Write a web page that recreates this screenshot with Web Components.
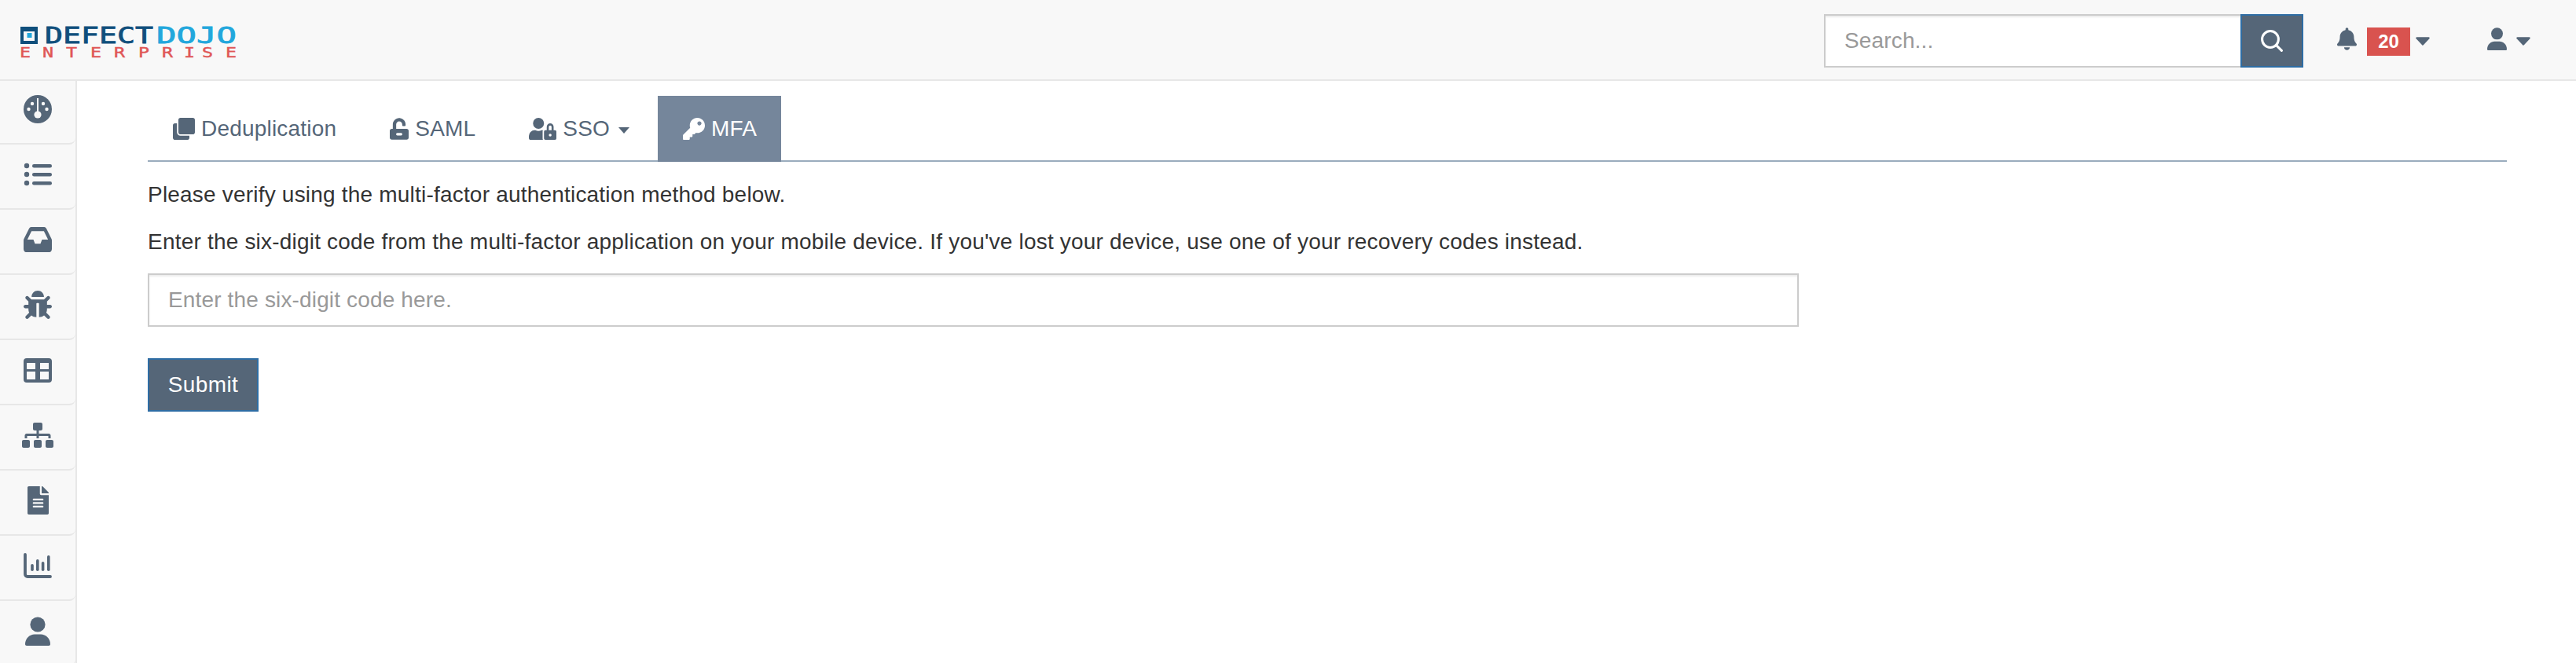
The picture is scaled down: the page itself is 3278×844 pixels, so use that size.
<!DOCTYPE html>
<html lang="en">
<head>
<meta charset="utf-8">
<title>DefectDojo - MFA</title>
<style>
  html, body { margin: 0; height: 100%; overflow: hidden; background: #fff; }
  body { font: 28px/40px "Liberation Sans", Arial, sans-serif; letter-spacing: .2px; color: #333; }
</style>
</head>
<body>
<dd-app>
  <dd-navbar slot="top"></dd-navbar>
  <dd-sidebar slot="side">
    <dd-side-item icon="gauge" w="36" h="36"></dd-side-item>
    <dd-side-item icon="list" w="36" h="30"></dd-side-item>
    <dd-side-item icon="inbox" w="36" h="32"></dd-side-item>
    <dd-side-item icon="bug" w="36" h="36"></dd-side-item>
    <dd-side-item icon="table" w="36" h="31"></dd-side-item>
    <dd-side-item icon="sitemap" w="40" h="32"></dd-side-item>
    <dd-side-item icon="file" w="27" h="36"></dd-side-item>
    <dd-side-item icon="chart" w="36" h="32"></dd-side-item>
    <dd-side-item icon="user" w="32" h="37"></dd-side-item>
  </dd-sidebar>
  <dd-tabs>
    <dd-tab icon="clone" w="28">Deduplication</dd-tab>
    <dd-tab icon="unlock" w="24">SAML</dd-tab>
    <dd-tab icon="userlock" w="35" caret>SSO</dd-tab>
    <dd-tab icon="key" w="28" active>MFA</dd-tab>
  </dd-tabs>
  <dd-mfa-form></dd-mfa-form>
</dd-app>

<script>
const ICONS = {
  gauge: { box: '0 0 36 36', body: `
    <circle cx="18" cy="18" r="18"/>
    <g fill="#f8f8f8"><circle cx="11" cy="11" r="2.2"/><circle cx="25" cy="11" r="2.2"/><circle cx="6.5" cy="18" r="2.2"/><circle cx="29.5" cy="18" r="2.2"/>
    <rect x="17" y="4" width="2" height="20"/><circle cx="18" cy="25" r="4.6"/></g>` },
  list: { box: '0 0 36 30', body: `
    <circle cx="4" cy="4" r="3.2"/><circle cx="4" cy="15" r="3.2"/><circle cx="4" cy="26" r="3.2"/>
    <rect x="11" y="2" width="25" height="4.4" rx="2.2"/><rect x="11" y="13" width="25" height="4.4" rx="2.2"/><rect x="11" y="24" width="25" height="4.4" rx="2.2"/>` },
  inbox: { box: '0 64 576 384', stretch: true, d: 'M567.938 243.908L462.25 85.374A48.003 48.003 0 0 0 422.311 64H153.689a48 48 0 0 0-39.938 21.374L8.062 243.908A47.994 47.994 0 0 0 0 270.533V400c0 26.51 21.49 48 48 48h480c26.51 0 48-21.49 48-48V270.533a47.994 47.994 0 0 0-8.062-26.625zM162.252 128h251.497l85.333 128H376l-32 64H232l-32-64H76.918l85.334-128z' },
  bug: { box: '0 0 512 512', d: 'M511.988 288.9c-.478 17.43-15.217 31.1-32.653 31.1H424v16c0 21.864-4.882 42.584-13.6 61.145l60.228 60.228c12.496 12.497 12.496 32.758 0 45.255-12.498 12.497-32.759 12.496-45.256 0l-54.736-54.736C345.886 467.965 314.351 480 280 480V236c0-6.627-5.373-12-12-12h-24c-6.627 0-12 5.373-12 12v244c-34.351 0-65.886-12.035-90.636-32.108l-54.736 54.736c-12.498 12.497-32.759 12.496-45.256 0-12.496-12.497-12.496-32.758 0-45.255l60.228-60.228C92.882 378.584 88 357.864 88 336v-16H32.666C15.23 320 .491 306.33.013 288.9-.484 270.816 14.028 256 32 256h56v-58.745l-46.628-46.628c-12.496-12.497-12.496-32.758 0-45.255 12.498-12.497 32.758-12.497 45.256 0L141.255 160h229.489l54.627-54.627c12.498-12.497 32.758-12.497 45.256 0 12.496 12.497 12.496 32.758 0 45.255L424 197.255V256h56c17.972 0 32.484 14.816 31.988 32.9zM257 0c-61.856 0-112 50.144-112 112h224C369 50.144 318.856 0 257 0z' },
  table: { box: '0 0 36 31', evenodd: true, d: 'M4 0h28a4 4 0 0 1 4 4v23a4 4 0 0 1-4 4H4a4 4 0 0 1-4-4V4a4 4 0 0 1 4-4zM4 6v8h11V6zM21 6v8h11V6zM4 17v10h11V17zM21 17v10h11V17z' },
  sitemap: { box: '0 0 640 512', d: 'M128 352H32c-17.67 0-32 14.33-32 32v96c0 17.67 14.33 32 32 32h96c17.67 0 32-14.33 32-32v-96c0-17.67-14.33-32-32-32zm-24-80h192v48h48v-48h192v48h48v-57.59c0-21.17-17.23-38.41-38.41-38.41H344v-64h40c17.67 0 32-14.33 32-32V32c0-17.67-14.33-32-32-32H256c-17.67 0-32 14.33-32 32v96c0 17.67 14.33 32 32 32h40v64H94.41C73.23 224 56 241.23 56 262.41V320h48v-48zm264 80h-96c-17.67 0-32 14.33-32 32v96c0 17.67 14.33 32 32 32h96c17.67 0 32-14.33 32-32v-96c0-17.67-14.33-32-32-32zm240 0h-96c-17.67 0-32 14.33-32 32v96c0 17.67 14.33 32 32 32h96c17.67 0 32-14.33 32-32v-96c0-17.67-14.33-32-32-32z' },
  file: { box: '0 0 384 512', d: 'M224 136V0H24C10.7 0 0 10.7 0 24v464c0 13.3 10.7 24 24 24h336c13.3 0 24-10.7 24-24V160H248c-13.2 0-24-10.8-24-24zm64 236c0 6.6-5.4 12-12 12H108c-6.6 0-12-5.4-12-12v-8c0-6.6 5.4-12 12-12h168c6.6 0 12 5.4 12 12v8zm0-64c0 6.6-5.4 12-12 12H108c-6.6 0-12-5.4-12-12v-8c0-6.6 5.4-12 12-12h168c6.6 0 12 5.4 12 12v8zm0-72v8c0 6.6-5.4 12-12 12H108c-6.6 0-12-5.4-12-12v-8c0-6.6 5.4-12 12-12h168c6.6 0 12 5.4 12 12zm96-114.1v6.1H256V0h6.1c6.4 0 12.5 2.5 17 7l97.9 98c4.5 4.5 7 10.6 7 16.9z' },
  chart: { box: '0 0 36 32', body: `
    <path d="M2 2v25a3 3 0 0 0 3 3h29" fill="none" stroke="currentColor" stroke-width="3.8" stroke-linecap="round"/>
    <rect x="9.2" y="14" width="3.6" height="9" rx="1.8"/><rect x="16" y="8" width="3.6" height="15" rx="1.8"/>
    <rect x="22.8" y="11" width="3.6" height="12" rx="1.8"/><rect x="30" y="3" width="3.6" height="20" rx="1.8"/>` },
  user: { box: '0 0 32 37', body: `
    <circle cx="16" cy="10" r="9.6"/>
    <path d="M0 35c0-7.5 6-12.5 12-12.5h8c6 0 12 5 12 12.5 0 1.2-.8 2-2 2H2c-1.2 0-2-.8-2-2z"/>` },
  clone: { box: '0 0 512 512', d: 'M464 0c26.51 0 48 21.49 48 48v288c0 26.51-21.49 48-48 48H176c-26.51 0-48-21.49-48-48V48c0-26.51 21.49-48 48-48h288M176 416c-44.112 0-80-35.888-80-80V128H48c-26.51 0-48 21.49-48 48v288c0 26.51 21.49 48 48 48h288c26.51 0 48-21.49 48-48v-48H176z' },
  unlock: { box: '0 0 448 512', evenodd: true, d: 'M400 256H152V152.9c0-39.6 31.7-72.5 71.3-72.9 40-.4 72.7 32.1 72.7 72v16c0 13.3 10.7 24 24 24h32c13.3 0 24-10.7 24-24v-16C376 68 307.5-.3 223.5 0 139.5.3 72 69.5 72 153.5V256H48c-26.5 0-48 21.5-48 48v160c0 26.5 21.5 48 48 48h352c26.5 0 48-21.5 48-48V304c0-26.5-21.5-48-48-48zM180 354h88a30 30 0 0 1 0 60h-88a30 30 0 0 1 0-60z' },
  userlock: { box: '0 0 640 512', d: 'M224 256A128 128 0 1 0 96 128a128 128 0 0 0 128 128zm96 64a63.08 63.08 0 0 1 8.1-30.5c-4.8-.5-9.5-1.5-14.5-1.5h-16.7a174.08 174.08 0 0 1-145.8 0h-16.7A134.43 134.43 0 0 0 0 422.4V464a48 48 0 0 0 48 48h280.9a63.54 63.54 0 0 1-8.9-32zm288-32h-32v-80a80 80 0 0 0-160 0v80h-32a32 32 0 0 0-32 32v160a32 32 0 0 0 32 32h224a32 32 0 0 0 32-32V320a32 32 0 0 0-32-32zM496 432a32 32 0 1 1 32-32 32 32 0 0 1-32 32zm32-144h-64v-80a32 32 0 0 1 64 0z' },
  key: { box: '0 0 512 512', d: 'M512 176.001C512 273.203 433.202 352 336 352c-11.22 0-22.19-1.062-32.827-3.069l-24.012 27.014A23.999 23.999 0 0 1 261.223 384H224v40c0 13.255-10.745 24-24 24h-40v40c0 13.255-10.745 24-24 24H24c-13.255 0-24-10.745-24-24v-78.059c0-6.365 2.529-12.47 7.029-16.971l161.802-161.802C163.108 213.814 160 195.271 160 176 160 78.798 238.797.001 335.999 0 433.488-.001 512 78.511 512 176.001zM336 128c0 26.51 21.49 48 48 48s48-21.49 48-48-21.49-48-48-48-48 21.49-48 48z' },
  bell: { box: '0 0 448 512', d: 'M224 512c35.32 0 63.97-28.65 63.97-64H160.03c0 35.35 28.65 64 63.97 64zm215.39-149.71c-19.32-20.76-55.47-51.99-55.47-154.29 0-77.7-54.48-139.9-127.94-155.16V32c0-17.67-14.32-32-31.98-32s-31.98 14.33-31.98 32v20.84C118.56 68.1 64.08 130.3 64.08 208c0 102.3-36.15 133.53-55.47 154.29-6 6.45-8.66 14.16-8.61 21.71.11 16.4 12.98 32 32.1 32h383.8c19.12 0 32-15.6 32.1-32 .05-7.55-2.61-15.27-8.61-21.71z' },
  search: { box: '0 0 28 28', body: `
    <g fill="none" stroke="currentColor" stroke-width="3" stroke-linecap="round"><circle cx="12" cy="12" r="10.4"/><path d="M19.6 19.6l6.8 6.8"/></g>` },
  caret: { box: '0 0 18 11', body: `
    <path d="M1.5 1.5h15L9 9.5z" stroke="currentColor" stroke-width="2.4" stroke-linejoin="round"/>` }
};

class DdIcon extends HTMLElement {
  constructor() {
    super();
    this.attachShadow({mode: 'open'});
  }
  connectedCallback() {
    const icon = ICONS[this.getAttribute('name')];
    const w = this.getAttribute('w');
    const h = this.getAttribute('h') || w;
    const inner = icon.body || `<path d="${icon.d}"${icon.evenodd ? ' fill-rule="evenodd"' : ''}/>`;
    this.shadowRoot.innerHTML = `
      <style>
        :host { display: inline-flex; flex: none; line-height: 0; }
        svg { display: block; fill: currentColor; }
      </style>
      <svg width="${w}" height="${h}" viewBox="${icon.box}"${icon.stretch ? ' preserveAspectRatio="none"' : ''} aria-hidden="true">${inner}</svg>
    `;
  }
}
customElements.define('dd-icon', DdIcon);

class DdApp extends HTMLElement {
  constructor() {
    super();
    this.attachShadow({mode: 'open'});
    this.shadowRoot.innerHTML = `
      <style>
        :host { display: grid; grid-template: 103px 1fr / 98px 1fr; height: 844px; overflow: hidden; }
        .top { grid-column: 1 / 3; position: relative; z-index: 1; }
        main { padding: 19px 88px 0 90px; min-width: 0; }
      </style>
      <div class="top"><slot name="top"></slot></div>
      <slot name="side"></slot>
      <main><slot></slot></main>
    `;
  }
}
customElements.define('dd-app', DdApp);

class DdNavbar extends HTMLElement {
  constructor() {
    super();
    this.attachShadow({mode: 'open'});
    this.shadowRoot.innerHTML = `
      <style>
        :host { display: flex; align-items: center; box-sizing: border-box; height: 103px; padding: 3px 58px 0 26px; background: #f8f8f8; border-bottom: 2px solid #e7e7e7; color: #556678; }
        .logo { display: block; }
        .logo text { font-family: "DejaVu Sans Mono", monospace; letter-spacing: 0; }
        form { display: flex; margin: 0 43px 0 auto; }
        input { box-sizing: border-box; width: 530px; height: 68px; padding: 12px 24px; border: 2px solid #ccc; border-right: 0; border-radius: 0; outline: 0; background: #fff; font: 28px "Liberation Sans", Arial, sans-serif; letter-spacing: .15px; color: #555; box-shadow: inset 0 2px 2px rgba(0,0,0,.075); }
        input::placeholder { color: #999; opacity: 1; }
        button { display: flex; align-items: center; justify-content: center; box-sizing: border-box; width: 80px; height: 68px; padding: 0; border: 2px solid #2e6da4; background: #556678; color: #fff; }
        .bell { margin: -5px 13px 0 0; }
        .badge { box-sizing: border-box; width: 55px; height: 36px; margin: 2px 7px 0 0; background: #d9534f; color: #fff; font: 700 24px/36px "Liberation Sans", Arial, sans-serif; letter-spacing: 0; text-align: center; }
        .caret { margin-top: 1px; }
        .me { margin: -5px 12px 0 73px; }
      </style>
      <svg class="logo" width="276" height="60" viewBox="0 -12 276 60">
        <path fill="#0f4f7c" fill-rule="evenodd" d="M0 0h22v22H0zM4 6v12h14V6z"/>
        <rect x="8.5" y="8" width="6" height="6" fill="#22a7dc"/>
        <text x="31" y="21" font-size="29" textLength="138" lengthAdjust="spacingAndGlyphs" fill="#0f4f7c" stroke="#0f4f7c" stroke-width=".8">DEFECT</text>
        <text x="173" y="21" font-size="29" textLength="102" lengthAdjust="spacingAndGlyphs" fill="#22a7dc" stroke="#22a7dc" stroke-width=".8">DOJO</text>
        <text transform="scale(1.3 1)" x="-.8 21.5 44.6 68.5 91.5 115.4 138.5 160 177.7 200.8" y="39" font-size="18" fill="#e05656" stroke="#e05656" stroke-width=".4">ENTERPRISE</text>
      </svg>
      <form onsubmit="return false">
        <input type="text" placeholder="Search...">
        <button type="button" aria-label="Search"><dd-icon name="search" w="28"></dd-icon></button>
      </form>
      <dd-icon class="bell" name="bell" w="25" h="29"></dd-icon>
      <span class="badge">20</span>
      <dd-icon class="caret" name="caret" w="18" h="11"></dd-icon>
      <dd-icon class="me" name="user" w="25" h="29"></dd-icon>
      <dd-icon class="caret" name="caret" w="18" h="11"></dd-icon>
    `;
  }
}
customElements.define('dd-navbar', DdNavbar);

class DdSidebar extends HTMLElement {
  constructor() {
    super();
    this.attachShadow({mode: 'open'});
    this.shadowRoot.innerHTML = `
      <style>
        :host { display: block; box-sizing: border-box; width: 98px; margin-top: -2px; overflow: hidden; background: #f8f8f8; border-right: 2px solid #e7e7e7; }
      </style>
      <slot></slot>
    `;
  }
}
customElements.define('dd-sidebar', DdSidebar);

class DdSideItem extends HTMLElement {
  constructor() {
    super();
    this.attachShadow({mode: 'open'});
  }
  connectedCallback() {
    this.shadowRoot.innerHTML = `
      <style>
        :host { display: flex; align-items: center; justify-content: center; box-sizing: border-box; height: 83px; padding-bottom: 5px; border-bottom: 2px solid #e7e7e7; border-radius: 0 0 8px 0; color: #556678; }
      </style>
      <dd-icon name="${this.getAttribute('icon')}" w="${this.getAttribute('w')}" h="${this.getAttribute('h')}"></dd-icon>
    `;
  }
}
customElements.define('dd-side-item', DdSideItem);

class DdTabs extends HTMLElement {
  constructor() {
    super();
    this.attachShadow({mode: 'open'});
    this.shadowRoot.innerHTML = `
      <style>
        :host { display: flex; gap: 4px; height: 84px; box-sizing: border-box; border-bottom: 2px solid #9aacbd; }
      </style>
      <slot></slot>
    `;
  }
}
customElements.define('dd-tabs', DdTabs);

class DdTab extends HTMLElement {
  constructor() {
    super();
    this.attachShadow({mode: 'open'});
  }
  connectedCallback() {
    const caret = this.hasAttribute('caret') ? '<span class="caret"></span>' : '';
    this.shadowRoot.innerHTML = `
      <style>
        :host { display: flex; align-items: center; gap: 8px; box-sizing: border-box; height: 84px; padding: 0 32px; color: #556678; }
        :host([active]) { padding-right: 31px; background: #75869b; color: #fff; }
        .caret { width: 0; height: 0; margin-left: 3px; margin-top: 3px; border-top: 8px solid currentColor; border-left: 7px solid transparent; border-right: 7px solid transparent; }
      </style>
      <dd-icon name="${this.getAttribute('icon')}" w="${this.getAttribute('w')}" h="28"></dd-icon>
      <span><slot></slot></span>${caret}
    `;
  }
}
customElements.define('dd-tab', DdTab);

class DdMfaForm extends HTMLElement {
  constructor() {
    super();
    this.attachShadow({mode: 'open'});
    this.shadowRoot.innerHTML = `
      <style>
        :host { display: block; padding-top: 22px; color: #333; }
        p { margin: 0 0 20px; }
        input { display: block; box-sizing: border-box; width: 2101px; height: 68px; padding: 12px 24px; border: 2px solid #ccc; border-radius: 0; outline: 0; background: #fff; font: 28px "Liberation Sans", Arial, sans-serif; letter-spacing: .15px; color: #555; box-shadow: inset 0 2px 2px rgba(0,0,0,.075); }
        input::placeholder { color: #999; opacity: 1; }
        button { display: block; box-sizing: border-box; width: 141px; height: 68px; margin-top: 40px; padding: 0; border: 2px solid #2e6da4; background: #556678; color: #fff; font: 28px "Liberation Sans", Arial, sans-serif; letter-spacing: .4px; }
      </style>
      <p>Please verify using the multi-factor authentication method below.</p>
      <p>Enter the six-digit code from the multi-factor application on your mobile device. If you've lost your device, use one of your recovery codes instead.</p>
      <input type="text" placeholder="Enter the six-digit code here.">
      <button type="button">Submit</button>
    `;
  }
}
customElements.define('dd-mfa-form', DdMfaForm);
</script>
</body>
</html>
